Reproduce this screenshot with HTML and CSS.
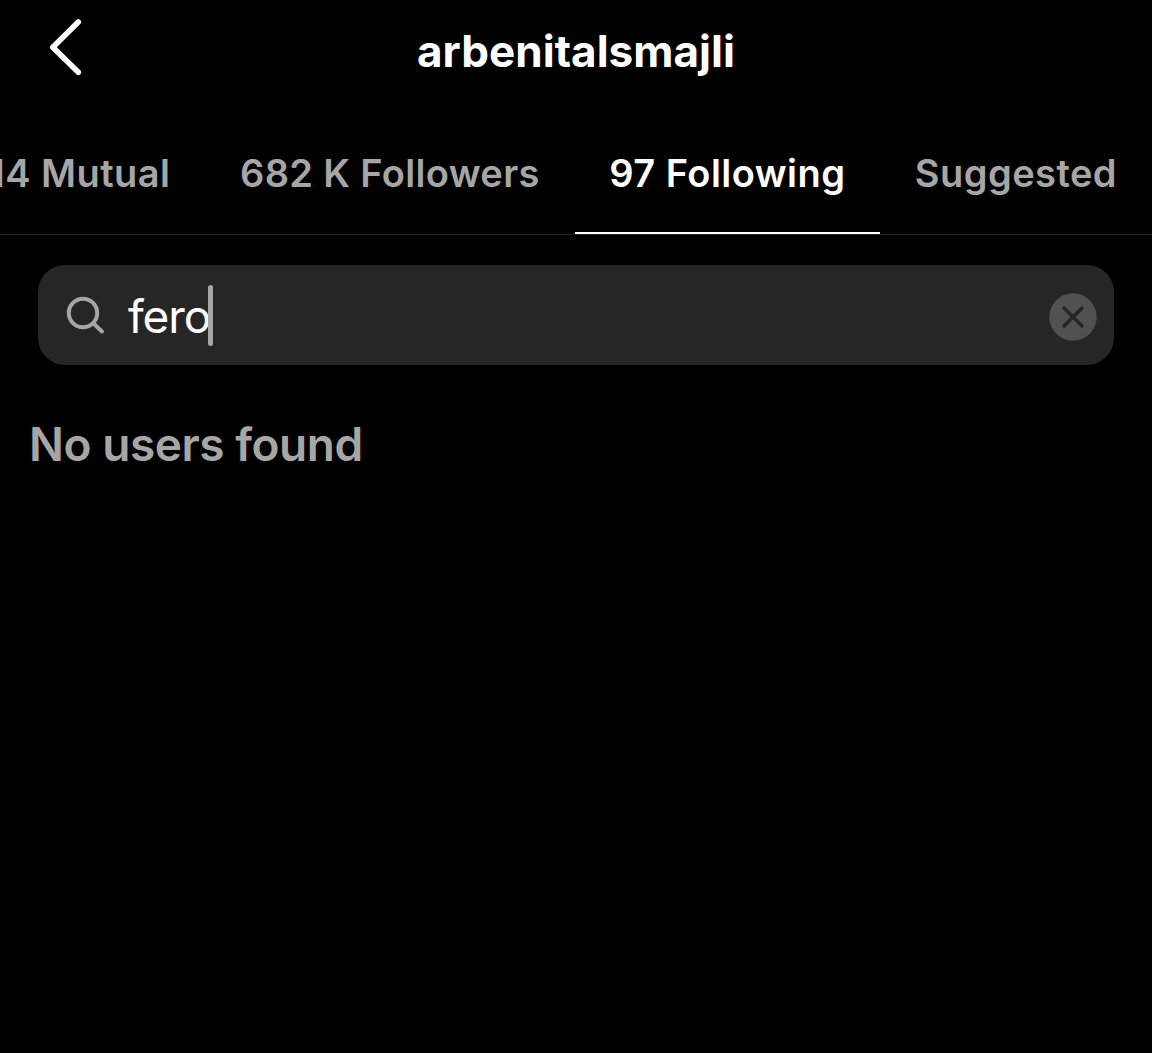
FILE: index.html
```html
<!DOCTYPE html>
<html lang="en">
<head>
    <meta charset="UTF-8">
    <meta name="viewport" content="width=device-width, initial-scale=1.0">
    <title>arbenitalsmajli</title>
    <link rel="stylesheet" href="styles.css">
</head>
<body>

    <header class="topbar">
        <svg class="back" width="36" height="60" viewBox="0 0 36 60" fill="none" stroke="#fff" stroke-width="5.6" stroke-linecap="round" stroke-linejoin="round">
            <path d="M30.3 5 L4.8 30.2 L30.3 55.2"/>
        </svg>
        <h1 class="username">arbenitalsmajli</h1>
    </header>

    <nav class="tabs">
        <div class="tab">14 Mutual</div>
        <div class="tab followers">682 K Followers</div>
        <div class="tab active">97 Following</div>
        <div class="tab">Suggested</div>
    </nav>

    <div class="search">
        <svg class="search-icon" width="40" height="40" viewBox="0 0 40 40" fill="none" stroke="#a6a6a6" stroke-width="4" stroke-linecap="round">
            <circle cx="17" cy="18" r="14.2"/>
            <path d="M27.5 28.5 L36 36.5"/>
        </svg>
        <span class="query">fero</span>
        <span class="caret"></span>
        <svg class="clear" width="48" height="48" viewBox="0 0 48 48">
            <circle cx="24" cy="24" r="23.7" fill="#515151"/>
            <path d="M15 15 L33 33 M33 15 L15 33" stroke="#262626" stroke-width="3.4" stroke-linecap="round"/>
        </svg>
    </div>

    <p class="empty">No users found</p>

</body>
</html>
```

FILE: styles.css
```css
* {
    box-sizing: border-box;
}
body {
    margin: 0;
    height: 100vh;
    background-color: #000;
    color: #fff;
    font-family: Inter, "Liberation Sans", sans-serif;
    overflow: hidden;
}
.topbar {
    display: grid;
    grid-template-columns: 84px 1fr 84px;
    height: 116px;
    padding: 0;
}
.back {
    margin: 17px 0 0 48px;
}
.username {
    margin: 22px 0 0;
    font-size: 44px;
    line-height: 58px;
    font-weight: 700;
    letter-spacing: 0.05px;
    text-align: center;
}
.tabs {
    display: flex;
    justify-content: flex-end;
    height: 119px;
    border-bottom: 1px solid #262626;
}
.tab {
    flex: none;
    height: 118px;
    padding: 33px 35px 0 34.5px;
    color: #a6a6a6;
    font-size: 38px;
    line-height: 48px;
    font-weight: 600;
    letter-spacing: 0.45px;
    white-space: nowrap;
}
.tab.followers {
    letter-spacing: 0.35px;
}
.tab.active {
    color: #fff;
    border-bottom: 2px solid #fff;
}
.search {
    display: flex;
    align-items: center;
    height: 100px;
    margin: 30px 38px 0;
    padding: 0 17px 0 28px;
    border-radius: 27px;
    background-color: #262626;
}
.query {
    margin: 2px 0 0 22px;
    font-size: 46px;
    line-height: 60px;
    letter-spacing: -1.1px;
}
.caret {
    width: 5px;
    height: 61px;
    margin-left: -2px;
    border-radius: 3px;
    background-color: #a6a6a6;
}
.clear {
    margin: 3px 0 0 auto;
}
.empty {
    margin: 50px 0 0 29px;
    color: #a6a6a6;
    font-size: 46px;
    line-height: 58px;
    font-weight: 600;
    letter-spacing: -0.45px;
}
```
